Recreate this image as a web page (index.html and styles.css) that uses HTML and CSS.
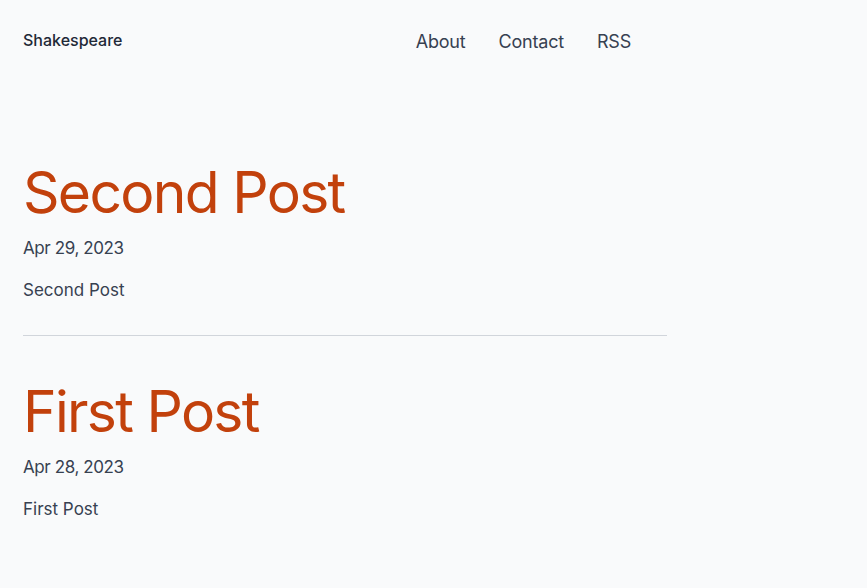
FILE: index.html
```html
<!DOCTYPE html>
<html lang="en">
<head>
<meta charset="utf-8">
<title>Shakespeare</title>
<link rel="stylesheet" href="styles.css">
</head>
<body>
<div class="page">
  <header class="site-header">
    <a class="brand" href="#">Shakespeare</a>
    <nav class="nav">
      <a href="#">About</a>
      <a href="#">Contact</a>
      <a href="#">RSS</a>
    </nav>
  </header>
  <main class="posts">
    <article class="post">
      <h2 class="post-title">Second Post</h2>
      <p class="post-date">Apr 29, 2023</p>
      <p class="post-desc">Second Post</p>
    </article>
    <hr class="divider">
    <article class="post">
      <h2 class="post-title">First Post</h2>
      <p class="post-date">Apr 28, 2023</p>
      <p class="post-desc">First Post</p>
    </article>
  </main>
</div>
</body>
</html>
```
FILE: styles.css
```css
html, body {
  margin: 0;
  padding: 0;
  background: #f9fafb;
}
body {
  font-family: Inter, "Noto Sans", sans-serif;
  color: #374151;
}
.page {
  width: 644px;
  padding: 0 23px;
}
a {
  color: inherit;
  text-decoration: none;
}
.site-header {
  display: flex;
  justify-content: space-between;
  align-items: center;
  height: 82px;
}
.brand {
  font-size: 16px;
  font-weight: 500;
  color: #1f2937;
  margin-top: -2px;
}
.nav {
  display: flex;
  gap: 33px;
  padding-right: 36px;
  font-size: 18px;
  letter-spacing: -0.2px;
}
.posts {
  padding-top: 81px;
}
.post-title {
  margin: 0;
  font-size: 57px;
  font-weight: 400;
  line-height: 60px;
  letter-spacing: -1.7px;
  color: #c2410c;
}
.post-date {
  margin: 13px 0 0;
  font-size: 17px;
  line-height: 24px;
  letter-spacing: -0.4px;
}
.post-desc {
  margin: 18px 0 0;
  font-size: 17px;
  line-height: 24px;
}
.divider {
  border: 0;
  border-top: 1px solid #d1d5db;
  margin: 33px 0 46px;
}
```
